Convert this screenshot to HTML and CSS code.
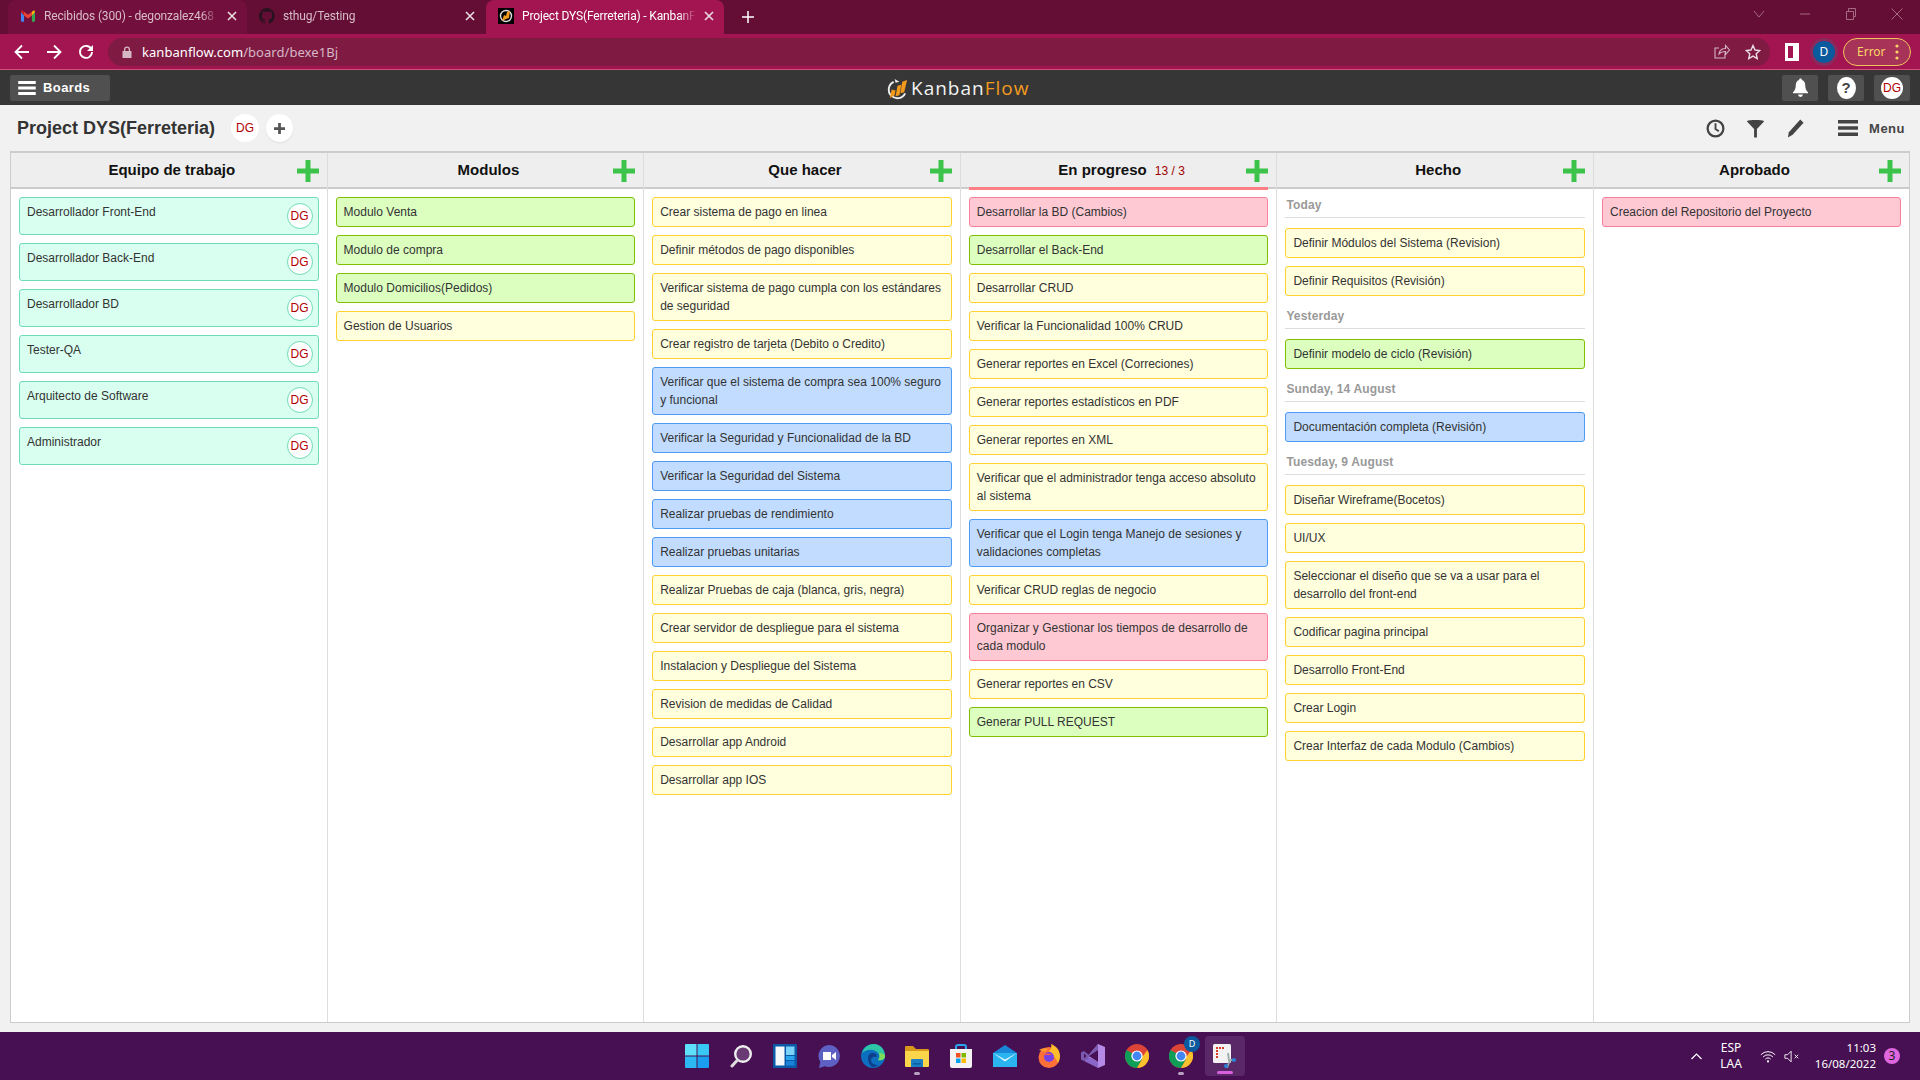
FILE: index.html
```html
<!DOCTYPE html>
<html lang="es">
<head>
  <meta charset="UTF-8">
  <title>Project DYS(Ferreteria) - KanbanFlow</title>
  <link rel="stylesheet" href="styles.css">
</head>
<body>
  <svg class="sprite" width="0" height="0">
    <symbol id="plus" viewBox="0 0 22 22"><path d="M8.500 0h5v8.500H22v5h-8.500V22h-5v-8.500H0v-5h8.500z"/></symbol>
    <symbol id="burger" viewBox="0 0 20 16"><path d="M0 0h20v3.500H0zM0 6.200h20v3.500H0zM0 12.500h20V16H0z"/></symbol>
    <symbol id="close" viewBox="0 0 10 10"><path d="M1 1l8 8M9 1l-8 8" fill="none" stroke="currentColor" stroke-width="1.600"/></symbol>
    <symbol id="chrome-mark" viewBox="0 0 24 24">
      <circle cx="12" cy="12" r="12" fill="#db4437"/>
      <path d="M12 12L1.600 6A12 12 0 0 0 12 24l6-10.400z" fill="#0f9d58"/>
      <path d="M12 12l6 0 4.400-6A12 12 0 0 1 12 24l5.200-9z" fill="#fbc02d"/>
      <circle cx="12" cy="12" r="5.600" fill="#fff"/>
      <circle cx="12" cy="12" r="4.400" fill="#4285f4"/>
    </symbol>
  </svg>

  <!-- browser chrome -->
  <div class="tabstrip">
    <div class="tab tab-first">
      <svg class="tab-icon" viewBox="0 0 16 13"><path d="M0 2v10a1 1 0 0 0 1 1h2.500V6z" fill="#4285f4"/><path d="M16 2v10a1 1 0 0 1-1 1h-2.500V6z" fill="#34a853"/><path d="M3.500 6L8 9.400 12.500 6V1.500L8 5 3.500 1.500z" fill="#ea4335"/><path d="M0 2l3.500 4V1.500L2 .4C1 -.3 0 .6 0 2z" fill="#c5221f"/><path d="M16 2l-3.500 4V1.500L14 .4c1-.7 2 .2 2 1.600z" fill="#fbbc04"/></svg>
      <span class="tab-title">Recibidos (300) - degonzalez468</span>
      <svg class="tab-close"><use href="#close"/></svg>
    </div>
    <div class="tab">
      <svg class="tab-icon" viewBox="0 0 16 16"><path fill="#2a1320" d="M8 0a8 8 0 0 0-2.500 15.600c.4.100.5-.2.500-.4v-1.400c-2.200.5-2.700-1-2.700-1-.4-.9-.9-1.200-.9-1.200-.7-.5.100-.5.100-.5.800.1 1.200.8 1.200.8.700 1.200 1.900.9 2.300.7.100-.5.300-.9.500-1.100-1.800-.2-3.600-.9-3.600-4 0-.9.300-1.600.8-2.100-.1-.2-.4-1 .1-2.100 0 0 .7-.2 2.200.8a7.600 7.600 0 0 1 4 0c1.500-1 2.200-.8 2.200-.8.400 1.100.2 1.900.1 2.100.5.600.8 1.300.8 2.100 0 3.100-1.900 3.700-3.700 3.900.300.300.6.800.6 1.500v2.200c0 .2.100.5.600.4A8 8 0 0 0 8 0z"/></svg>
      <span class="tab-title">sthug/Testing</span>
      <svg class="tab-close"><use href="#close"/></svg>
    </div>
    <div class="tab tab-active">
      <svg class="tab-icon" viewBox="0 0 16 16"><rect width="16" height="16" fill="#000"/><circle cx="8" cy="8" r="5.500" fill="none" stroke="#ddd" stroke-width="1.400"/><path d="M4 13l2-6 2 1 1-4 3-1-1 7-3 1z" fill="#f29a1d"/></svg>
      <span class="tab-title">Project DYS(Ferreteria) - KanbanF</span>
      <svg class="tab-close"><use href="#close"/></svg>
    </div>
    <svg class="new-tab" viewBox="0 0 12 12"><path d="M6 0v12M0 6h12" fill="none" stroke="#fff" stroke-width="1.500"/></svg>
    <div class="window-controls">
      <svg viewBox="0 0 12 12"><path d="M1 3l5 6 5-6" fill="none" stroke="currentColor"/></svg>
      <svg viewBox="0 0 12 12"><path d="M1 6h10" fill="none" stroke="currentColor"/></svg>
      <svg viewBox="0 0 12 12"><path d="M1.500 3.500h7v8h-7zM3.500 3.500v-3h7v8h-2" fill="none" stroke="currentColor"/></svg>
      <svg viewBox="0 0 12 12"><path d="M.5 .5l11 11M11.500 .5l-11 11" fill="none" stroke="currentColor"/></svg>
    </div>
  </div>

  <div class="toolbar">
    <svg class="nav-btn" viewBox="0 0 16 16"><path d="M15 8H2M8 1.500L1.500 8 8 14.500" fill="none" stroke="#fff" stroke-width="1.800"/></svg>
    <svg class="nav-btn" viewBox="0 0 16 16"><path d="M1 8h13M8 1.500L14.500 8 8 14.500" fill="none" stroke="#fff" stroke-width="1.800"/></svg>
    <svg class="nav-btn" viewBox="0 0 16 16"><path d="M13.500 5.500A6 6 0 1 0 14 8" fill="none" stroke="#fff" stroke-width="1.800"/><path d="M15 1v6H9z" fill="#fff"/></svg>
    <div class="omnibox">
      <svg class="lock" viewBox="0 0 10 12"><path d="M2 5V3.500a3 3 0 0 1 6 0V5h1.500v7H.5V5zm1.300 0h3.400V3.500a1.700 1.700 0 0 0-3.400 0z" fill="#d5b8c4"/></svg>
      <span class="url"><b>kanbanflow.com</b>/board/bexe1Bj</span>
      <svg class="omni-icon" viewBox="0 0 16 16"><path d="M11 9.500V14H1V4h4M5 10c.5-3.500 3-5.500 6.500-5.500V1.500L15.500 6l-4 4.500V7.500C8.800 7.500 6.500 8.200 5 10z" fill="none" stroke="#d5b8c4" stroke-width="1.100"/></svg>
      <svg class="omni-icon" viewBox="0 0 16 16"><path d="M8 1.500l2 4.500 4.800.5-3.600 3.200 1 4.800L8 12.100l-4.200 2.400 1-4.800L1.200 6.500 6 6z" fill="none" stroke="#ecdde3" stroke-width="1.400"/></svg>
    </div>
    <svg class="side-panel" viewBox="0 0 14 18"><path d="M0 0h14v18H0zM3 3v12h5V3z" fill="#fff" fill-rule="evenodd"/></svg>
    <div class="profile"><span>D</span></div>
    <div class="error-pill">
      <span>Error</span>
      <svg viewBox="0 0 4 16"><circle cx="2" cy="2" r="1.600"/><circle cx="2" cy="8" r="1.600"/><circle cx="2" cy="14" r="1.600"/></svg>
    </div>
  </div>

  <!-- kanbanflow header -->
  <header class="app-header">
    <button class="boards-btn"><svg><use href="#burger"/></svg>Boards</button>
    <div class="logo">
      <svg viewBox="0 0 24 24"><path d="M8 5a9 9 0 1 0 12 12" fill="none" stroke="#eee" stroke-width="2"/><path d="M9 2l5 3-4 1z" fill="#eee"/><path d="M4 22l2-9 4 1-1 5zM10 20l2-11 4-1-2 11zM15 17l2-12 5-2-3 13z" fill="#f29a1d"/></svg>
      <span>Kanban<em>Flow</em></span>
    </div>
    <div class="header-actions">
      <button class="dark-btn"><svg viewBox="0 0 18 20"><path d="M9 0c1 0 1.500.7 1.500 1.500C13 2.300 14 4.500 14 7c0 4 1.500 6 3 7.500v1H1v-1C2.500 13 4 11 4 7c0-2.500 1-4.700 3.500-5.500C7.500.7 8 0 9 0zM6.500 17h5a2.500 2.500 0 0 1-5 0z" fill="#fff"/></svg></button>
      <button class="dark-btn"><span class="help-circle">?</span></button>
      <button class="dark-btn"><span class="avatar avatar-header">DG</span></button>
    </div>
  </header>

  <div class="board-bar">
    <h1>Project DYS(Ferreteria)</h1>
    <span class="avatar avatar-bar">DG</span>
    <span class="avatar avatar-add"><svg viewBox="0 0 12 12"><path d="M4.500 0h3v4.500H12v3H7.500V12h-3V7.500H0v-3h4.500z" fill="#555"/></svg></span>
    <div class="bar-tools">
      <svg class="tool" viewBox="0 0 20 20"><circle cx="10" cy="10" r="8.300" fill="none" stroke="#444" stroke-width="2.400"/><path d="M10 4.500V10.500l3.500 2.500" fill="none" stroke="#444" stroke-width="2"/></svg>
      <svg class="tool" viewBox="0 0 20 20"><path d="M1 2.500C1 .5 19 .5 19 2.500L11.500 10.500V19.500H8.500V10.500z" fill="#444"/></svg>
      <svg class="tool" viewBox="0 0 20 20"><path d="M15 .5l3.500 3.500L7 16.500 2 19.500l1-5.500z" fill="#444"/></svg>
      <div class="menu-link"><svg><use href="#burger"/></svg>Menu</div>
    </div>
  </div>

  <main class="board">
    <section class="col">
      <div class="col-head"><h2>Equipo de trabajo</h2><svg class="add"><use href="#plus"/></svg></div>
      <div class="col-body">
        <div class="card teal person"><span>Desarrollador Front-End</span><span class="avatar">DG</span></div>
        <div class="card teal person"><span>Desarrollador Back-End</span><span class="avatar">DG</span></div>
        <div class="card teal person"><span>Desarrollador BD</span><span class="avatar">DG</span></div>
        <div class="card teal person"><span>Tester-QA</span><span class="avatar">DG</span></div>
        <div class="card teal person"><span>Arquitecto de Software</span><span class="avatar">DG</span></div>
        <div class="card teal person"><span>Administrador</span><span class="avatar">DG</span></div>
      </div>
    </section>

    <section class="col">
      <div class="col-head"><h2>Modulos</h2><svg class="add"><use href="#plus"/></svg></div>
      <div class="col-body">
        <div class="card green">Modulo Venta</div>
        <div class="card green">Modulo de compra</div>
        <div class="card green">Modulo Domicilios(Pedidos)</div>
        <div class="card yellow">Gestion de Usuarios</div>
      </div>
    </section>

    <section class="col">
      <div class="col-head"><h2>Que hacer</h2><svg class="add"><use href="#plus"/></svg></div>
      <div class="col-body">
        <div class="card yellow">Crear sistema de pago en linea</div>
        <div class="card yellow">Definir métodos de pago disponibles</div>
        <div class="card yellow">Verificar sistema de pago cumpla con los estándares de seguridad</div>
        <div class="card yellow">Crear registro de tarjeta (Debito o Credito)</div>
        <div class="card blue">Verificar que el sistema de compra sea 100% seguro y funcional</div>
        <div class="card blue">Verificar la Seguridad y Funcionalidad de la BD</div>
        <div class="card blue">Verificar la Seguridad del Sistema</div>
        <div class="card blue">Realizar pruebas de rendimiento</div>
        <div class="card blue">Realizar pruebas unitarias</div>
        <div class="card yellow">Realizar Pruebas de caja (blanca, gris, negra)</div>
        <div class="card yellow">Crear servidor de despliegue para el sistema</div>
        <div class="card yellow">Instalacion y Despliegue del Sistema</div>
        <div class="card yellow">Revision de medidas de Calidad</div>
        <div class="card yellow">Desarrollar app Android</div>
        <div class="card yellow">Desarrollar app IOS</div>
      </div>
    </section>

    <section class="col">
      <div class="col-head over-limit"><h2>En progreso <small>13 / 3</small></h2><svg class="add"><use href="#plus"/></svg></div>
      <div class="col-body">
        <div class="card pink">Desarrollar la BD (Cambios)</div>
        <div class="card green">Desarrollar el Back-End</div>
        <div class="card yellow">Desarrollar CRUD</div>
        <div class="card yellow">Verificar la Funcionalidad 100% CRUD</div>
        <div class="card yellow">Generar reportes en Excel (Correciones)</div>
        <div class="card yellow">Generar reportes estadísticos en PDF</div>
        <div class="card yellow">Generar reportes en XML</div>
        <div class="card yellow">Verificar que el administrador tenga acceso absoluto al sistema</div>
        <div class="card blue">Verificar que el Login tenga Manejo de sesiones y validaciones completas</div>
        <div class="card yellow">Verificar CRUD reglas de negocio</div>
        <div class="card pink">Organizar y Gestionar los tiempos de desarrollo de cada modulo</div>
        <div class="card yellow">Generar reportes en CSV</div>
        <div class="card green">Generar PULL REQUEST</div>
      </div>
    </section>

    <section class="col">
      <div class="col-head"><h2>Hecho</h2><svg class="add"><use href="#plus"/></svg></div>
      <div class="col-body">
        <h3 class="day day-first">Today</h3>
        <div class="card yellow">Definir Módulos del Sistema (Revision)</div>
        <div class="card yellow">Definir Requisitos (Revisión)</div>
        <h3 class="day">Yesterday</h3>
        <div class="card green">Definir modelo de ciclo (Revisión)</div>
        <h3 class="day">Sunday, 14 August</h3>
        <div class="card blue">Documentación completa (Revisión)</div>
        <h3 class="day">Tuesday, 9 August</h3>
        <div class="card yellow">Diseñar Wireframe(Bocetos)</div>
        <div class="card yellow">UI/UX</div>
        <div class="card yellow">Seleccionar el diseño que se va a usar para el desarrollo del front-end</div>
        <div class="card yellow">Codificar pagina principal</div>
        <div class="card yellow">Desarrollo Front-End</div>
        <div class="card yellow">Crear Login</div>
        <div class="card yellow">Crear Interfaz de cada Modulo (Cambios)</div>
      </div>
    </section>

    <section class="col">
      <div class="col-head"><h2>Aprobado</h2><svg class="add"><use href="#plus"/></svg></div>
      <div class="col-body">
        <div class="card pink">Creacion del Repositorio del Proyecto</div>
      </div>
    </section>
  </main>

  <!-- windows taskbar -->
  <footer class="taskbar">
    <div class="task-icons">
      <div class="task"><svg viewBox="0 0 24 24"><path d="M0 1a1 1 0 0 1 1-1h10.500v11.500H0z" fill="#5fe0fa"/><path d="M12.500 0H23a1 1 0 0 1 1 1v10.500H12.500z" fill="#38c8f5"/><path d="M0 12.500h11.500V24H1a1 1 0 0 1-1-1z" fill="#2cb8f3"/><path d="M12.500 12.500H24V23a1 1 0 0 1-1 1H12.500z" fill="#1a9ff0"/></svg></div>
      <div class="task"><svg viewBox="0 0 24 24"><circle cx="14" cy="10" r="7.800" fill="#6a3a75" stroke="#eee" stroke-width="2.400"/><path d="M8.500 16L3 22" stroke="#ddd" stroke-width="3" stroke-linecap="round"/></svg></div>
      <div class="task"><svg viewBox="0 0 24 24"><rect width="24" height="24" rx="1" fill="#0a5aa8"/><rect x="2.500" y="2.500" width="9" height="19" fill="#f4f8fb"/><rect x="13" y="2.500" width="8.500" height="8.500" fill="#7bd3fb"/><rect x="13" y="12" width="8.500" height="4" fill="#2aa5ef"/><rect x="13" y="17" width="8.500" height="4.500" fill="#1a82d8"/></svg></div>
      <div class="task"><svg viewBox="0 0 24 24"><path d="M12 1a11 11 0 1 1-4 21.300L2 24l1.300-6A11 11 0 0 1 12 1z" fill="#5f60c4"/><path d="M6 8h8v8H6zM15 11l4-3v8l-4-3z" fill="#fff"/></svg></div>
      <div class="task"><svg viewBox="0 0 24 24"><circle cx="12" cy="12" r="12" fill="#0c6fc0"/><path d="M1 9C3 3 8 0 13 0c6 0 11 5 11 12 0 4-4 5-7 4 2-2 2-6-1-8-4-3-10-3-15 1z" fill="#2fc6a8"/><path d="M24 12c0 3-3 5-7 4 2-2 2-5 1-7 3 0 6 1 6 3z" fill="#7fdc5a"/><path d="M7 14c0-3 2-5 5-5s4 2 4 4c-3-1-6 0-6 3 0 3 3 5 7 5-2 2-6 3-8 0-1-2-2-4-2-7z" fill="#0f3f8a"/></svg></div>
      <div class="task open"><svg viewBox="0 0 24 24"><path d="M0 3a1 1 0 0 1 1-1h7l3 3h12a1 1 0 0 1 1 1v2H0z" fill="#d99a1b"/><path d="M0 7h24v15a1 1 0 0 1-1 1H1a1 1 0 0 1-1-1z" fill="#fbd54a"/><path d="M6 16a1 1 0 0 1 1-1h10a1 1 0 0 1 1 1v7H6z" fill="#1a7fc4"/><path d="M8 19h8v1.500H8z" fill="#0c5f9e"/></svg></div>
      <div class="task"><svg viewBox="0 0 24 24"><path d="M7 7V3a2 2 0 0 1 2-2h6a2 2 0 0 1 2 2v4" fill="none" stroke="#2aa5ef" stroke-width="2"/><path d="M1 5h22v17a2 2 0 0 1-2 2H3a2 2 0 0 1-2-2z" fill="#f3f3f3"/><path d="M7 9h4.500v4.500H7z" fill="#f25022"/><path d="M12.500 9H17v4.500h-4.500z" fill="#7fba00"/><path d="M7 14.500h4.500V19H7z" fill="#00a4ef"/><path d="M12.500 14.500H17V19h-4.500z" fill="#ffb900"/></svg></div>
      <div class="task"><svg viewBox="0 0 24 24"><path d="M0 9l12-8 12 8v14H0z" fill="#1a86d8"/><path d="M0 9h24v14H0z" fill="#2ab5f0"/><path d="M0 9l12 6.500L24 9l-12 8.500z" fill="#e8f9ff"/></svg></div>
      <div class="task"><svg viewBox="0 0 24 24"><circle cx="12" cy="13.500" r="10.500" fill="#ff7139"/><path d="M14 0c5 2 9 6 9 12 0 3-1 5-2 7-2-5-6-9-9-12 2-2 3-4 2-7z" fill="#ffbd2e"/><path d="M2 6c3-2 6-2 9-1l-3 3z" fill="#ff9a2e"/><circle cx="12" cy="13" r="5" fill="#7542e5"/><path d="M7 11c2-2 6-2 8 0-2 0-5 0-8 0z" fill="#ff5a3c"/></svg></div>
      <div class="task"><svg viewBox="0 0 24 24"><path d="M17 0l7 3v18l-7 3L6 13z" fill="#b48ae6"/><path d="M17 0L8 11 3 7 0 8.500v7L3 17l14-11z" fill="#7a5bb0"/><path d="M17 6v12L8 12z" fill="#471052"/><path d="M3 9.500v5L5.500 12z" fill="#471052"/><path d="M3 17l14 7V18L8 13z" fill="#8a66c8"/></svg></div>
      <div class="task"><svg viewBox="0 0 24 24"><use href="#chrome-mark"/></svg></div>
      <div class="task open">
        <svg viewBox="0 0 24 24"><use href="#chrome-mark"/></svg>
        <span class="task-profile">D</span>
      </div>
      <div class="task active"><svg viewBox="0 0 24 24"><rect x="0" y="0" width="18" height="19" rx="1.500" fill="#f2f2f2"/><path d="M3 3h2v2H3zM6 3h2v2H6zM9 3h2v2H9zM3 6h2v2H3zM3 9h2v2H3zM3 12h2v2H3z" fill="#d83b2a"/><path d="M15 9l1 8M17 16l-3 8M17 16h5" stroke="#9aa" stroke-width="1.800" fill="none"/><circle cx="21" cy="16" r="2" fill="#2a82d8"/><circle cx="13" cy="22" r="2" fill="#2a82d8"/></svg></div>
    </div>
    <div class="tray">
      <svg class="tray-chevron" viewBox="0 0 12 7"><path d="M1 6l5-5 5 5" fill="none" stroke="#fff" stroke-width="1.200"/></svg>
      <div class="tray-lang">ESP<br>LAA</div>
      <svg class="tray-icon" viewBox="0 0 18 14"><path d="M1 5a11 11 0 0 1 16 0M3.500 7.500a7.500 7.500 0 0 1 11 0M6 10a4 4 0 0 1 6 0" fill="none" stroke="#fff" stroke-width="1.100"/><circle cx="9" cy="12.500" r="1.200" fill="#fff"/></svg>
      <svg class="tray-icon" viewBox="0 0 18 14"><path d="M1 5h3l4-4v12l-4-4H1zM12 5l4 4M16 5l-4 4" fill="none" stroke="#fff"/></svg>
      <div class="tray-clock">11:03<br>16/08/2022</div>
      <span class="tray-badge">3</span>
    </div>
  </footer>
</body>
</html>
```

FILE: styles.css
```css
* { box-sizing: border-box; }
html, body { margin: 0; height: 100%; }
body { display: flex; flex-direction: column; height: 100vh; overflow: hidden; background: #f1f1f1; font-family: "Liberation Sans", Arial, sans-serif; font-size: 12px; color: #333; }
h1, h2, h3 { margin: 0; }
button { border: 0; padding: 0; font: inherit; color: inherit; }
.sprite { position: absolute; }

/* browser chrome */
.tabstrip { display: flex; align-items: flex-end; height: 34px; background: #640e35; font-family: "Noto Sans", sans-serif; }
.tab { display: flex; align-items: center; width: 238px; height: 34px; padding: 0 10px 2px 12px; border-radius: 8px 8px 0 0; color: #d7bcc8; }
.tab-first { width: 239px; margin-left: 8px; background: #730f3c; }
.tab-active { margin-left: 1px; background: #a31550; color: #fff; }
.tab-icon { flex: none; width: 16px; height: 16px; margin-right: 8px; }
.tab-first .tab-icon { width: 14px; height: 12px; margin: 0 9px 0 1px; }
.tab-title { flex: 1; overflow: hidden; white-space: nowrap; font-family: Roboto, sans-serif; font-size: 12px; letter-spacing: -.15px; -webkit-mask-image: linear-gradient(to right, #000 90%, transparent); mask-image: linear-gradient(to right, #000 90%, transparent); }
.tab-close { flex: none; width: 10px; height: 10px; margin-left: 8px; color: #eadde3; }
.new-tab { width: 12px; height: 12px; margin: 0 0 11px 18px; }
.window-controls { display: flex; gap: 34px; margin: 0 17px 14px auto; color: #a66a84; }
.window-controls svg { width: 12px; height: 12px; }

.toolbar { display: flex; align-items: center; height: 36px; padding: 0 9px 0 6px; background: #a31550; border-bottom: 1px solid #d0507a; font-family: "Noto Sans", sans-serif; }
.nav-btn { width: 16px; height: 16px; margin: 0 8px; }
.omnibox { display: flex; align-items: center; flex: 1; height: 28px; margin-left: 6px; padding: 0 9px 0 14px; border-radius: 14px; background: #7f1a43; color: #d5b8c4; font-size: 13px; }
.lock { width: 10px; height: 12px; margin-right: 10px; }
.url { flex: 1; letter-spacing: .05px; }
.url b { font-weight: 400; color: #fff; }
.omni-icon { width: 16px; height: 16px; margin-left: 15px; }
.side-panel { width: 14px; height: 18px; margin-left: 15px; }
.profile { display: flex; align-items: center; justify-content: center; width: 28px; height: 28px; margin-left: 11px; border-radius: 50%; background: #8b2a5c; }
.profile span { width: 22px; height: 22px; border-radius: 50%; background: #0b5a9e; color: #fff; font-size: 12px; line-height: 22px; text-align: center; }
.error-pill { display: flex; align-items: center; justify-content: space-between; width: 68px; height: 28px; margin-left: 5px; padding: 0 11px 0 13px; border: 1px solid #f0c45c; border-radius: 14px; background: #a83358; color: #fbd667; font-size: 12px; }
.error-pill svg { width: 4px; height: 16px; fill: #fbd667; }

/* kanbanflow header */
.app-header { display: flex; align-items: center; justify-content: space-between; position: relative; height: 35px; padding: 0 10px; background: #363636; }
.boards-btn { display: flex; align-items: center; width: 100px; height: 26px; padding-left: 8px; border-radius: 2px; background: #505050; color: #fff; font-weight: 700; font-size: 13px; letter-spacing: .4px; }
.boards-btn svg { width: 18px; height: 14px; margin-right: 7px; fill: #fff; }
.logo { display: flex; align-items: center; position: absolute; left: 886px; top: 6px; height: 24px; }
.logo svg { width: 23px; height: 23px; margin-right: 2px; }
.logo span { font-family: "Open Sans", sans-serif; font-size: 19px; line-height: 24px; letter-spacing: 1px; color: #f2f2f2; }
.logo em { font-style: normal; color: #f29a1d; }
.header-actions { display: flex; gap: 10px; }
.dark-btn { display: flex; align-items: center; justify-content: center; width: 36px; height: 26px; border-radius: 2px; background: #505050; }
.dark-btn > svg { width: 17px; height: 20px; }
.help-circle { width: 19px; height: 22px; border-radius: 50%; background: #fff; color: #444; font-weight: 700; font-size: 15px; line-height: 22px; text-align: center; }

.board-bar { display: flex; align-items: center; height: 46px; padding: 0 15px 0 17px; }
.board-bar h1 { width: 214px; font-size: 18px; line-height: 46px; color: #333; }
.bar-tools { display: flex; align-items: center; margin-left: auto; }
.tool { width: 19px; height: 19px; margin-right: 21px; }
.menu-link { display: flex; align-items: center; margin-left: 12px; font-weight: 700; font-size: 13px; letter-spacing: .5px; color: #444; }
.menu-link svg { width: 20px; height: 16px; margin-right: 11px; fill: #444; }

.avatar { display: flex; align-items: center; justify-content: center; flex: none; width: 26px; height: 26px; border: 1px solid #70dbb8; border-radius: 50%; background: #fff; color: #b00000; font-size: 12px; }
.avatar-bar { width: 28px; height: 28px; border: 0; }
.avatar-add { width: 27px; height: 28px; margin-left: 7px; border: 0; box-shadow: 0 1px 2px rgba(0, 0, 0, .08); }
.avatar-add svg { width: 11px; height: 11px; }
.avatar-header { width: 22px; height: 22px; border: 0; }

/* board */
.board { display: grid; grid-template-columns: repeat(5, 316.6px) 1fr; flex: none; height: 872px; margin: 0 10px; border: 1px solid #ccc; border-top-width: 2px; background: #fff; }
.col { border-right: 1px solid #ddd; }
.col:last-child { border-right: 0; }
.col-head { display: flex; align-items: center; height: 36px; padding: 0 8px 0 36px; border-bottom: 2px solid #ccc; background: #eee; }
.col-head h2 { flex: 1; font-size: 15px; line-height: 34px; color: #111; text-align: center; }
.col-head small { margin-left: 4px; font-size: 12px; font-weight: 400; color: #a00000; }
.col-head.over-limit { position: relative; }
.col-head.over-limit::after { content: ""; position: absolute; left: 8px; right: 8px; bottom: -3px; height: 3px; background: #ff7f85; }
.add { flex: none; width: 22px; height: 22px; margin-top: 2px; fill: #3cc34a; }
.col-body { padding: 8px 8px 0 8px; }

.card { min-height: 30px; margin-bottom: 8px; padding: 5px 7px; border: 1px solid; border-radius: 3px; line-height: 18px; color: #333; }
.teal { background: #d9fff0; border-color: #70dbb8; }
.green { background: #dcffc0; border-color: #7fc000; }
.yellow { background: #fffedd; border-color: #ffd02f; }
.blue { background: #c1dcff; border-color: #4d9bf5; }
.pink { background: #ffc9d3; border-color: #f9809b; }
.person { display: flex; justify-content: space-between; padding-right: 5px; }

.day { margin: 13px 0 10px; padding: 0 1px 4px; border-bottom: 1px solid #ddd; font-size: 12px; line-height: 15px; letter-spacing: .15px; color: #999; }
.day-first { margin-top: 1px; }

/* windows taskbar */
.taskbar { display: flex; justify-content: space-between; flex: none; height: 48px; margin-top: 9px; padding-left: 675px; background: #471052; color: #fff; font-family: "Noto Sans", sans-serif; font-size: 12px; }
.task-icons { display: flex; }
.task { display: flex; align-items: center; justify-content: center; position: relative; width: 44px; height: 48px; }
.task > svg { width: 24px; height: 24px; }
.task.open::after { content: ""; position: absolute; left: 19px; bottom: 5px; width: 6px; height: 3px; border-radius: 2px; background: #b8a0c0; }
.task.active { width: 40px; height: 40px; margin: 4px 2px; border-radius: 4px; background: #5a2866; }
.task.active::after { content: ""; position: absolute; left: 12px; bottom: 2px; width: 16px; height: 3px; border-radius: 2px; background: #d860e0; }
.task-profile { position: absolute; top: 4px; right: 3px; width: 16px; height: 16px; border-radius: 50%; background: #0b5a9e; font-size: 9px; line-height: 16px; text-align: center; }
.tray { display: flex; align-items: center; padding-right: 20px; }
.tray-chevron { width: 13px; height: 7px; margin-right: 14px; }
.tray-lang { width: 28px; margin-right: 15px; line-height: 16px; text-align: center; }
.tray-icon { width: 16px; height: 13px; margin-right: 8px; }
.tray-clock { width: 68px; margin-right: 8px; font-size: 11.500px; line-height: 16px; text-align: right; white-space: nowrap; }
.tray-badge { width: 16px; height: 16px; border-radius: 50%; background: #de66de; color: #222; line-height: 16px; text-align: center; }
```
